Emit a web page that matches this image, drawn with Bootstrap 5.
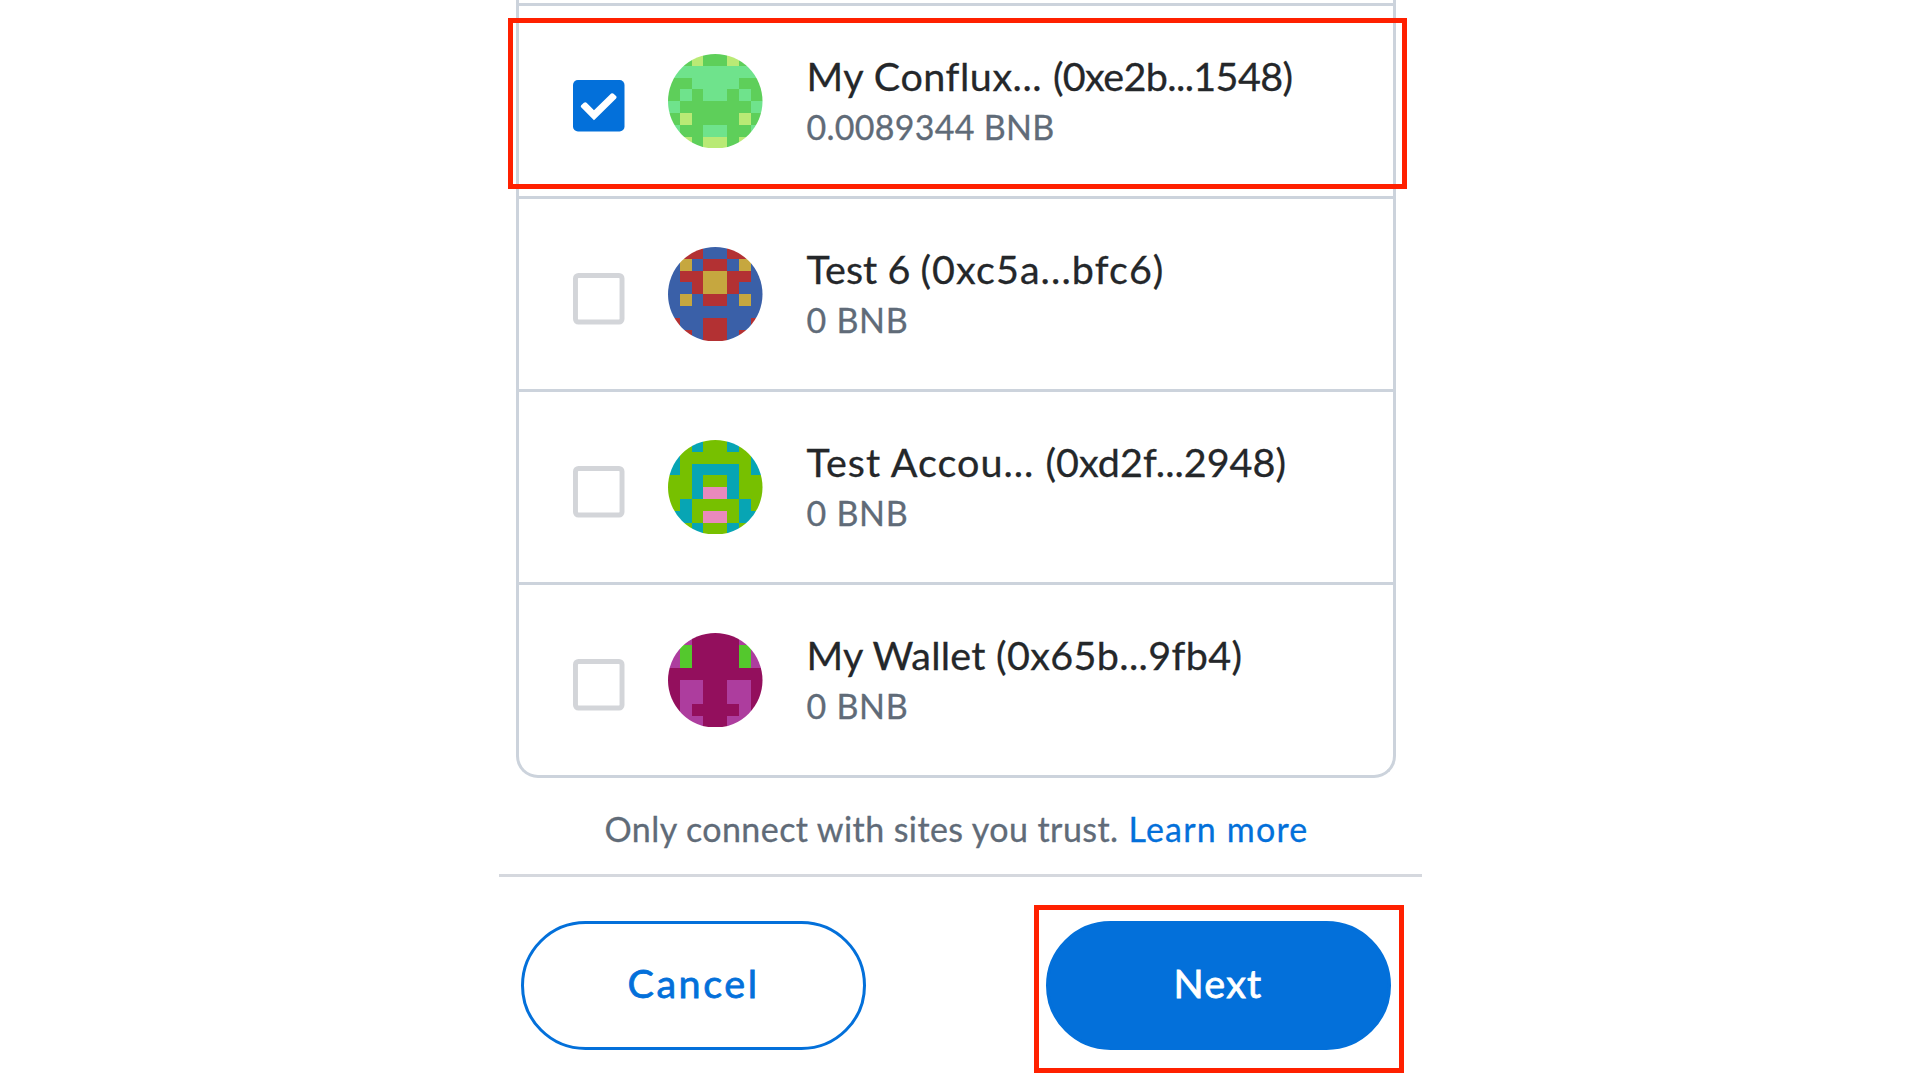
<!DOCTYPE html>
<html lang="en">
<head>
<meta charset="utf-8">
<meta name="viewport" content="width=device-width, initial-scale=1">
<title>Connect accounts</title>
<link href="https://cdn.jsdelivr.net/npm/bootstrap@5.3.0/dist/css/bootstrap.min.css" rel="stylesheet">
<style>
  :root { --brand: #0370da; --line: #ccd3dc; --alert: #ff2000; }
  body { font-family: Lato, "Liberation Sans", sans-serif; color: #24272a; height: 1080px; overflow: hidden; }
  .panel { width: 923px; }
  .account-list { width: 880px; margin-left: 17px; padding-top: 3px; border: 3px solid var(--line); border-top: 0; border-radius: 0 0 22px 22px; }
  .account { height: 193px; border-top: 3px solid var(--line); padding-left: 54.5px; }
  .tick { width: 51.5px; height: 51.5px; margin-top: 9.5px; }
  .avatar { width: 94.5px; height: 94.5px; margin-left: 43.5px; }
  .info { margin-left: 44px; padding-top: 1px; white-space: pre; }
  .acct-name { font-size: 39.5px; line-height: 50px; -webkit-text-stroke: .3px; }
  .acct-balance { font-size: 34px; line-height: 50px; padding-top: 1px; color: #606b78; -webkit-text-stroke: .3px; }
  .outline-mark { position: absolute; border: 5px solid var(--alert); pointer-events: none; }
  .mark-row { left: -11px; top: 12px; width: 899px; height: 171px; }
  .trust { height: 96px; padding-left: 106px; font-size: 34px; line-height: 102px; color: #606b78; white-space: nowrap; -webkit-text-stroke: .3px; }
  .trust a { color: var(--brand); margin-left: 10px; }
  .actions { border-top: 3px solid #d5d8de; padding: 44px 31px 0 22.5px; }
  .pill { width: 345px; height: 129px; padding-bottom: 11px; font-size: 39.5px; border: 3px solid var(--brand); color: var(--brand); -webkit-text-stroke: .8px; }
  .pill-solid { background: var(--brand); color: #fff; }
  .mark-next { left: -12px; top: -16px; width: 370px; height: 168px; }
</style>
</head>
<body class="bg-white">
<main class="panel mx-auto">
  <section class="account-list" id="accounts"></section>
  <p class="trust mb-0"><span data-w="514">Only connect with sites you trust.</span><a class="text-decoration-none" href="#"><span data-w="180">Learn more</span></a></p>
  <footer class="actions d-flex justify-content-between">
    <button class="btn pill rounded-pill" type="button"><span data-w="132">Cancel</span></button>
    <div class="position-relative">
      <button class="btn pill pill-solid rounded-pill" type="button"><span data-w="89">Next</span></button>
      <div class="outline-mark mark-next"></div>
    </div>
  </footer>
</main>
<script src="https://cdn.jsdelivr.net/npm/bootstrap@5.3.0/dist/js/bootstrap.bundle.min.js"></script>
<script>
  // Each avatar row lists the left four cells; the right half mirrors them.
  const accounts = [
    { name: 'My Conflux... ', w: 246.5, addr: '(0xe2b...1548)', aw: 239.5, bal: '0.0089344 BNB', bw: 248, on: true,
      colors: { a: '#5ecf5a', b: '#6fe38c', c: '#b9ea75' },
      cells: ['aaca', 'bbbb', 'aabb', 'abab', 'baaa', 'acaa', 'baab', 'acac'] },
    { name: 'Test 6 ', w: 114, addr: '(0xc5a...bfc6)', aw: 244, bal: '0 BNB', bw: 102,
      colors: { a: '#3a60a8', r: '#b33133', y: '#c6a73f' },
      cells: ['rrra', 'ayar', 'arry', 'aary', 'ayar', 'aaaa', 'raar', 'arar'] },
    { name: 'Test Accou... ', w: 239, addr: '(0xd2f...2948)', aw: 240.5, bal: '0 BNB', bw: 102,
      colors: { g: '#77c000', t: '#07a5b4', p: '#e989bd' },
      cells: ['ggtg', 'tggg', 'tgtt', 'ggtg', 'ggtp', 'gtgg', 'ttgp', 'ggtg'] },
    { name: 'My Wallet ', w: 189.5, addr: '(0x65b...9fb4)', aw: 246.5, bal: '0 BNB', bw: 102,
      colors: { m: '#930f5d', v: '#ad3d9e', g: '#54c82d' },
      cells: ['mvmm', 'vgmm', 'vgmm', 'mmmm', 'mvvm', 'mvvm', 'mvmm', 'vvvm'] }
  ];
  const tick = on => on
    ? '<svg class="tick flex-shrink-0" viewBox="0 0 52 52"><rect width="52" height="52" rx="5" fill="#0370da"/><path d="M8.2 27.6Q7.3 26.5 8.3 25.5L11 23Q12.5 22 13.7 23L21.2 30.6L38.5 13.7Q39.8 12.8 41 13.8L43.7 16.5Q44.5 17.6 43.5 18.8L21.2 40.6Z" fill="#fff"/></svg>'
    : '<svg class="tick flex-shrink-0" viewBox="0 0 52 52"><rect x="2.5" y="2.5" width="47" height="47" rx="3" fill="#fff" stroke="#d3d5d9" stroke-width="5"/></svg>';
  const avatar = (a, i) => {
    let r = '';
    a.cells.forEach((row, y) => [...row, ...[...row].reverse()].forEach((c, x) => {
      r += `<rect x="${x}" y="${y}" width="1" height="1" fill="${a.colors[c]}"/>`;
    }));
    return `<svg class="avatar flex-shrink-0" viewBox="0 0 8 8"><clipPath id="disc${i}"><circle cx="4" cy="4" r="4"/></clipPath><g clip-path="url(#disc${i})" shape-rendering="crispEdges">${r}</g></svg>`;
  };
  document.getElementById('accounts').innerHTML = accounts.map((a, i) => `
    <div class="account d-flex align-items-center position-relative">
      ${tick(a.on)}${avatar(a, i)}
      <div class="info"><div class="acct-name"><span data-w="${a.w}">${a.name}</span><span data-w="${a.aw}">${a.addr}</span></div><div class="acct-balance"><span data-w="${a.bw}">${a.bal}</span></div></div>
      ${a.on ? '<div class="outline-mark mark-row"></div>' : ''}
    </div>`).join('');
  document.querySelectorAll('[data-w]').forEach(s => {
    const extra = (+s.dataset.w - s.getBoundingClientRect().width) / s.textContent.length;
    s.style.letterSpacing = extra.toFixed(3) + 'px';
  });
</script>
</body>
</html>
